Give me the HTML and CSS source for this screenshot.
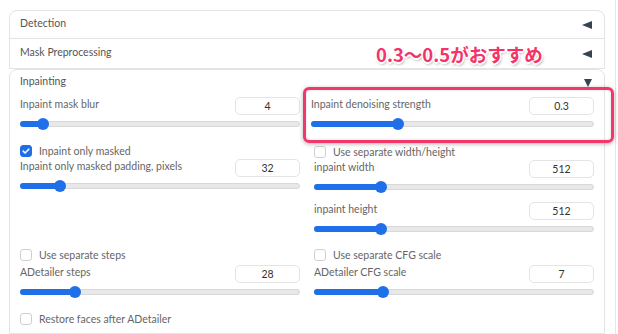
FILE: index.html
```html
<!DOCTYPE html>
<html lang="ja">
<head>
	<meta charset="utf-8">
	<meta name="viewport" content="width=device-width, initial-scale=1.0">
	<link rel="stylesheet" href="styles.css">
</head>
<body>
	<div class="page">
		<div class="acc">
			<div class="acc-row"><span>Detection</span><i class="tri-left"></i></div>
			<div class="acc-row"><span>Mask Preprocessing</span><i class="tri-left"></i></div>
		</div>

		<div class="panel">
			<div class="acc-head"><span>Inpainting</span><i class="tri-down"></i></div>

			<div class="grid">
				<div class="col">
					<div class="field">
						<div class="field-top"><span class="label">Inpaint mask blur</span><span class="num">4</span></div>
						<div class="slider" style="--p:0.0625"><div class="fill"></div><div class="thumb"></div></div>
					</div>
					<label class="check first checked"><span class="box"><svg viewBox="0 0 12 12" width="12" height="12"><path d="M3.2 6.2 5.1 8 8.8 4.2" fill="none" stroke="#fff" stroke-width="1.6" stroke-linecap="round" stroke-linejoin="round"/></svg></span>Inpaint only masked</label>
					<div class="field tight">
						<div class="field-top"><span class="label">Inpaint only masked padding, pixels</span><span class="num">32</span></div>
						<div class="slider" style="--p:0.125"><div class="fill"></div><div class="thumb"></div></div>
					</div>
				</div>
				<div class="col">
					<div class="field denoise">
						<div class="field-top"><span class="label">Inpaint denoising strength</span><span class="num">0.3</span></div>
						<div class="slider" style="--p:0.3"><div class="fill"></div><div class="thumb"></div></div>
					</div>
					<label class="check first right"><span class="box"></span>Use separate width/height</label>
					<div class="field tight">
						<div class="field-top"><span class="label">inpaint width</span><span class="num">512</span></div>
						<div class="slider" style="--p:0.2258"><div class="fill"></div><div class="thumb"></div></div>
					</div>
					<div class="field next">
						<div class="field-top"><span class="label">inpaint height</span><span class="num">512</span></div>
						<div class="slider" style="--p:0.2258"><div class="fill"></div><div class="thumb"></div></div>
					</div>
				</div>
			</div>

			<div class="grid row2">
				<div class="col">
					<label class="check"><span class="box"></span>Use separate steps</label>
					<div class="field step">
						<div class="field-top"><span class="label">ADetailer steps</span><span class="num">28</span></div>
						<div class="slider" style="--p:0.1812"><div class="fill"></div><div class="thumb"></div></div>
					</div>
				</div>
				<div class="col">
					<label class="check"><span class="box"></span>Use separate CFG scale</label>
					<div class="field step">
						<div class="field-top"><span class="label">ADetailer CFG scale</span><span class="num">7</span></div>
						<div class="slider" style="--p:0.2333"><div class="fill"></div><div class="thumb"></div></div>
					</div>
				</div>
			</div>

			<label class="check restore"><span class="box"></span>Restore faces after ADetailer</label>

			<div class="mark"></div>
		</div>

		<div class="note">0.3〜0.5がおすすめ</div>
	</div>
	<div class="rail"></div>
</body>
</html>
```

FILE: styles.css
```css
body {
	margin: 0;
	display: flex;
	background: white;
	font-family: Lato, "Noto Sans", sans-serif;
	font-size: 10.5px;
	color: #666;
}
.page {
	position: relative;
	width: 596px;
	margin: 10px 0 0 9px;
}
.rail {
	height: 100vh;
	margin-left: 10px;
	border-left: 1px solid #e6e6e6;
}
.acc {
	border: 1px solid #e4e4e4;
	border-radius: 8px 8px 0 0;
}
.acc-row {
	display: flex;
	align-items: center;
	justify-content: space-between;
	height: 27px;
	padding: 0 12px 0 10px;
	color: #555;
}
.acc-row span {
	margin-top: -3px;
}
.acc-row + .acc-row {
	height: 29px;
	border-top: 1px solid #e4e4e4;
}
.tri-left {
	border-top: 4.5px solid transparent;
	border-bottom: 4.5px solid transparent;
	border-right: 10px solid #3a4252;
}
.tri-down {
	margin-top: 4px;
	border-left: 4px solid transparent;
	border-right: 4px solid transparent;
	border-top: 8px solid #3a4252;
}
.panel {
	position: relative;
	border: 1px solid #e4e4e4;
	border-top-left-radius: 8px;
	border-top-right-radius: 8px;
	padding: 0 10px 8px 10px;
}
.acc-head {
	display: flex;
	align-items: center;
	justify-content: space-between;
	height: 22px;
	margin: 0 2px 5px 0;
	color: #555;
}
.grid {
	display: grid;
	grid-template-columns: 1fr 1fr;
	column-gap: 14px;
}
.row2 {
	margin-top: 14px;
}
.col {
	display: flex;
	flex-direction: column;
}
.field-top {
	display: flex;
	justify-content: space-between;
	align-items: flex-start;
	height: 18px;
}
.label {
	line-height: 15px;
}
.num {
	box-sizing: border-box;
	width: 65px;
	height: 18px;
	line-height: 16px;
	border: 1px solid #e4e4e4;
	border-radius: 5px;
	text-align: center;
	color: #333;
}
.slider {
	position: relative;
	height: 12px;
	margin-top: 3px;
}
.slider::before {
	content: "";
	position: absolute;
	left: 0;
	right: 0;
	top: 3px;
	height: 4px;
	border: 1px solid #d8d8d8;
	border-radius: 3px;
	background: #e8e8e8;
}
.fill {
	position: absolute;
	left: 0;
	top: 3px;
	height: 6px;
	width: calc(6px + var(--p) * (100% - 12px));
	border-radius: 3px;
	background: #1f6fe8;
}
.thumb {
	position: absolute;
	top: 0;
	left: calc(var(--p) * (100% - 12px));
	width: 12px;
	height: 12px;
	border-radius: 50%;
	background: #1f6fe8;
}
.denoise {
	margin-left: -3px;
}
.tight {
	margin-top: 2px;
}
.next {
	margin-top: 9px;
}
.step {
	margin-top: 4px;
}
.check {
	display: flex;
	align-items: center;
	height: 12px;
	line-height: 12px;
}
.check.first {
	margin-top: 15px;
}
.check.right {
	margin-top: 16px;
}
.box {
	box-sizing: border-box;
	width: 12px;
	height: 12px;
	margin-right: 7px;
	border: 1px solid #cfcfcf;
	border-radius: 3px;
	background: white;
}
.box svg {
	display: block;
	margin: -1px;
}
.checked .box {
	border-color: #1f6fe8;
	background: #1f6fe8;
}
.restore {
	margin-top: 15px;
}
.mark {
	position: absolute;
	left: 293px;
	top: 17px;
	width: 311px;
	height: 56px;
	box-sizing: border-box;
	border: 3px solid #f2386a;
	border-radius: 6px;
	box-shadow: 0 1px 4px rgba(0, 0, 0, 0.3), inset 0 0 3px rgba(0, 0, 0, 0.15);
}
.note {
	position: absolute;
	left: 367px;
	top: 34px;
	font-family: "Noto Sans CJK JP", sans-serif;
	font-size: 18.5px;
	font-weight: bold;
	line-height: 20px;
	color: #f5336b;
	text-shadow: 1.5px 0 0 #fff, -1.5px 0 0 #fff, 0 1.5px 0 #fff, 0 -1.5px 0 #fff,
		1px 1px 0 #fff, -1px -1px 0 #fff, 1px -1px 0 #fff, -1px 1px 0 #fff,
		1px 2px 3px rgba(0, 0, 0, 0.45);
}
```
